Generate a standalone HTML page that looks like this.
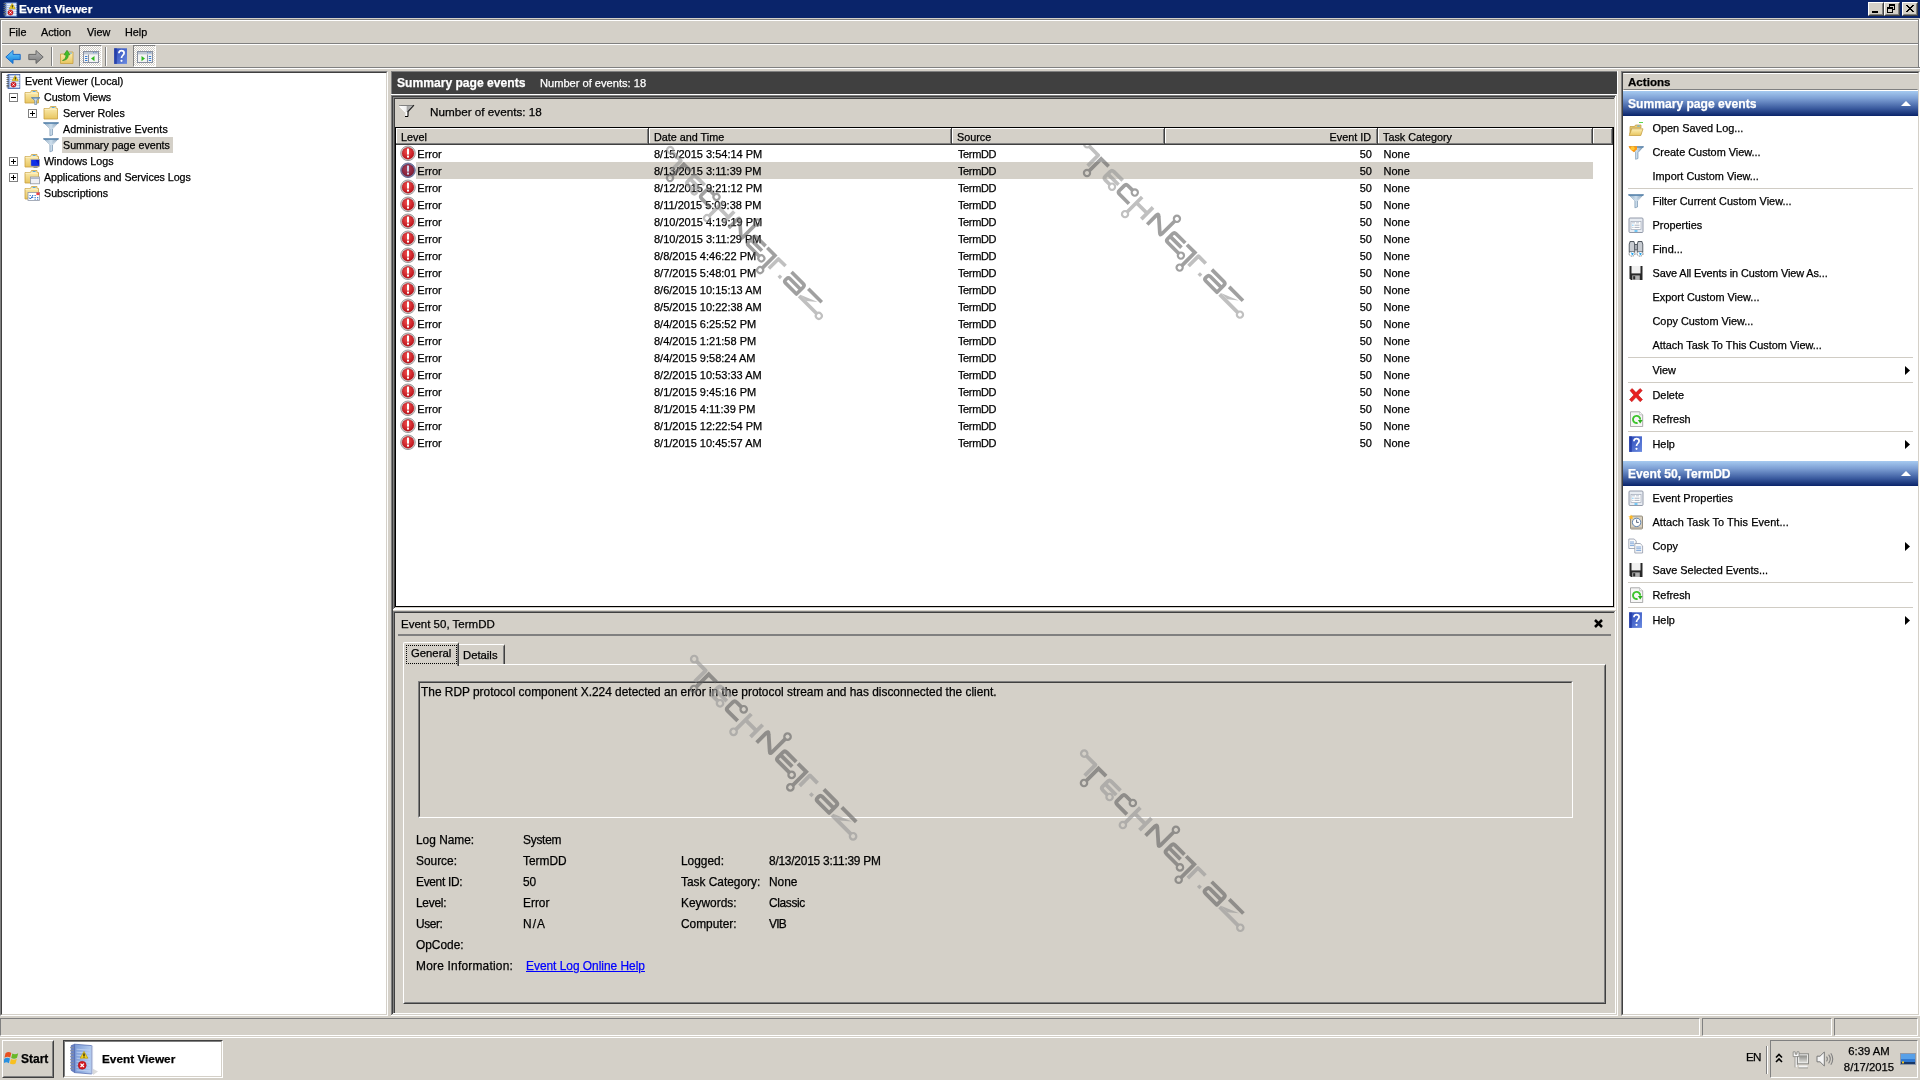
<!DOCTYPE html><html><head><meta charset="utf-8"><title>Event Viewer</title><style>
*{box-sizing:border-box;margin:0;padding:0}
html,body{width:1920px;height:1080px;overflow:hidden;background:#d4d0c8;font-family:"Liberation Sans",sans-serif;font-size:11px;color:#000}
.a{position:absolute}
.t{position:absolute;white-space:nowrap;line-height:14px;height:14px;-webkit-text-stroke:0.25px currentColor}
.tr{font-size:10.7px}
.ac{font-size:10.9px}
.ls{font-size:11px}
.dt{font-size:11.9px;line-height:15px;height:15px}
.sunk{border:1px solid;border-color:#808080 #fff #fff #808080}
.sunk2{border:1px solid;border-color:#404040 #d4d0c8 #d4d0c8 #404040}
.hl{position:absolute;height:1px}
.vl{position:absolute;width:1px}
svg{position:absolute;overflow:visible}
</style></head><body><div id="root" style="position:absolute;left:0;top:0;width:1920px;height:1080px;will-change:transform">
<svg width="0" height="0" style="position:absolute">
<defs>
<linearGradient id="gFold" x1="0" y1="0" x2="0" y2="1"><stop offset="0" stop-color="#fdf0b8"/><stop offset="1" stop-color="#e8c55e"/></linearGradient>
<linearGradient id="gFun" x1="0" y1="0" x2="1" y2="0"><stop offset="0" stop-color="#7f9db8"/><stop offset="0.5" stop-color="#cfe0ee"/><stop offset="1" stop-color="#6f8ca8"/></linearGradient>
<linearGradient id="gBack" x1="0" y1="0" x2="0" y2="1"><stop offset="0" stop-color="#6fd0ff"/><stop offset="1" stop-color="#0a78d8"/></linearGradient>
<linearGradient id="gFwd" x1="0" y1="0" x2="0" y2="1"><stop offset="0" stop-color="#b8b8b8"/><stop offset="1" stop-color="#787878"/></linearGradient>
<linearGradient id="gHelp" x1="0" y1="0" x2="1" y2="1"><stop offset="0" stop-color="#2a48b8"/><stop offset="1" stop-color="#6a8ae0"/></linearGradient>
<radialGradient id="gErr" cx="0.45" cy="0.35" r="0.7"><stop offset="0" stop-color="#f05050"/><stop offset="1" stop-color="#b80c14"/></radialGradient>
<radialGradient id="gErrS" cx="0.45" cy="0.35" r="0.7"><stop offset="0" stop-color="#a84058"/><stop offset="1" stop-color="#801830"/></radialGradient>
<linearGradient id="gBook2" x1="0" y1="0" x2="1" y2="0"><stop offset="0" stop-color="#7c9cd8"/><stop offset="1" stop-color="#b4ccf0"/></linearGradient>
<linearGradient id="gBook" x1="0" y1="0" x2="1" y2="0"><stop offset="0" stop-color="#7c98d4"/><stop offset="0.25" stop-color="#b4c8ec"/><stop offset="1" stop-color="#c4d6f2"/></linearGradient>

<symbol id="ev" viewBox="0 0 16 16">
 <rect x="3" y="1.5" width="11.8" height="14" fill="url(#gBook)" stroke="#4060a8" stroke-width="0.8"/>
 <path d="M5 3.5h9.4M5 5.5h9.4M5 7.5h9.4M5 9.5h9.4M5 11.5h9.4M5 13.5h9.4" stroke="#eef4fc" stroke-width="0.9"/>
 <path d="M1.5 2.5h2.5M1.5 4.5h2.5M1.5 6.5h2.5M1.5 8.5h2.5M1.5 10.5h2.5M1.5 12.5h2.5M1.5 13.8h2.5" stroke="#606870" stroke-width="1"/>
 <path d="M10.2 2.4L13.3 7.8H7.1z" fill="#f8d820" stroke="#a08000" stroke-width="0.5"/>
 <rect x="9.8" y="4.2" width="0.9" height="1.9" fill="#000"/><rect x="9.8" y="6.5" width="0.9" height="0.7" fill="#000"/>
 <circle cx="8.5" cy="11.6" r="2.6" fill="#d81c24" stroke="#901018" stroke-width="0.4"/>
 <path d="M7.4 10.5l2.2 2.2M9.6 10.5l-2.2 2.2" stroke="#fff" stroke-width="0.9"/>
</symbol>

<symbol id="ev_big" viewBox="0 0 30 34">
 <path d="M23.5 25.5L29 28.5L24 32z" fill="#000" opacity="0.14"/>
 <path d="M2.2 2.6L5.6 1.2V29.6L2.2 27.4z" fill="#6c84c4" stroke="#4c64ac" stroke-width="0.6"/>
 <path d="M5.6 1.2L22.6 2.6V31L5.6 29.6z" fill="url(#gBook2)" stroke="#4c64ac" stroke-width="0.7"/>
 <path d="M22.6 2.6L23.6 3V30.4L22.6 31z" fill="#fff" stroke="#8094c8" stroke-width="0.4"/>
 <path d="M7.5 6.2L21 7.2M7.5 9.2L21 10.2M7.5 12.2L21 13.2M7.5 15.2L21 16.2M7.5 18.2L21 19.2M7.5 21.2L21 22.2M7.5 24.2L21 25.2M7.5 27L21 28" stroke="#c8d8f4" stroke-width="0.7"/>
 <path d="M1.2 4.6h3.4M1.2 7.6h3.4M1.2 10.6h3.4M1.2 13.6h3.4M1.2 16.6h3.4M1.2 19.6h3.4M1.2 22.6h3.4M1.2 25.6h3.4" stroke="#8890a0" stroke-width="1"/>
 <path d="M15 8.4L18.9 15.2H11.1z" fill="#f8d418" stroke="#b09000" stroke-width="0.6" stroke-linejoin="round"/>
 <rect x="14.45" y="10.4" width="1.1" height="2.6" fill="#000"/><rect x="14.45" y="13.5" width="1.1" height="1" fill="#000"/>
 <circle cx="13.2" cy="22.3" r="4" fill="#d41820" stroke="#981018" stroke-width="0.5"/>
 <path d="M11.5 20.6l3.4 3.4M14.9 20.6l-3.4 3.4" stroke="#fff" stroke-width="1.3"/>
</symbol>
<symbol id="back" viewBox="0 0 16 16">
 <path d="M8 1.5L0.8 8L8 14.5V10.6H15.2V5.4H8z" fill="url(#gBack)" stroke="#1c6cc8" stroke-width="1" stroke-linejoin="round"/>
</symbol>
<symbol id="fwd" viewBox="0 0 16 16">
 <path d="M8 1.5L15.2 8L8 14.5V10.6H0.8V5.4H8z" fill="url(#gFwd)" stroke="#686868" stroke-width="1" stroke-linejoin="round"/>
</symbol>
<symbol id="folder" viewBox="0 0 16 16">
 <path d="M1 3.5h5.5l1-2H13v2h1.5V14H1z" fill="url(#gFold)" stroke="#c8a040" stroke-width="0.8"/>
 <rect x="8.6" y="2" width="3" height="1" fill="#58a8e8"/>
 <path d="M1.4 4.2h12.6" stroke="#fff8d8" stroke-width="0.7"/>
</symbol>
<symbol id="upf" viewBox="0 0 16 16">
 <path d="M1.5 5h5l1-2H14v11.5H1.5z" fill="url(#gFold)" stroke="#c8a040" stroke-width="0.8"/>
 <rect x="10.5" y="3.6" width="2.4" height="1" fill="#58a8e8"/>
 <path d="M3.5 11.5C6.5 10.5 7 8 6.8 5.8H5L8 1.3L11 5.8H9.2C9.6 9 7.5 11.3 3.5 11.5z" fill="#40c028" stroke="#288818" stroke-width="0.6"/>
</symbol>
<symbol id="panel_l" viewBox="0 0 16 16">
 <rect x="0.5" y="2.5" width="15" height="11" fill="#f4f4f4" stroke="#8890a0"/>
 <rect x="1" y="3" width="14" height="2.4" fill="#c0c8d4"/>
 <path d="M10 3.6h1.2M12.4 3.6h1.2" stroke="#5888c8" stroke-width="0.9"/>
 <path d="M5.5 5.5v8" stroke="#8890a0"/>
 <path d="M2 7.5h2.4M2 9.5h2.4M2 11.5h2.4" stroke="#3880d8" stroke-width="1"/>
 <path d="M11.5 7L8 9.6L11.5 12.2z" fill="#30b820"/>
</symbol>
<symbol id="panel_r" viewBox="0 0 16 16">
 <rect x="0.5" y="2.5" width="15" height="11" fill="#f4f4f4" stroke="#8890a0"/>
 <rect x="1" y="3" width="14" height="2.4" fill="#c0c8d4"/>
 <path d="M10 3.6h1.2M12.4 3.6h1.2" stroke="#5888c8" stroke-width="0.9"/>
 <path d="M10.5 5.5v8" stroke="#8890a0"/>
 <path d="M11.8 7.5h2.4M11.8 9.5h2.4M11.8 11.5h2.4" stroke="#3880d8" stroke-width="1"/>
 <path d="M4.5 7L8 9.6L4.5 12.2z" fill="#30b820"/>
</symbol>
<symbol id="help" viewBox="0 0 16 16">
 <rect x="1.2" y="0.3" width="12.8" height="15.6" fill="url(#gHelp)"/>
 <rect x="1.2" y="0.3" width="2.6" height="15.6" fill="#2038a0" opacity="0.75"/>
 <path d="M5.9 5.2C5.9 3.2 7.1 2.6 8.4 2.6C10.1 2.6 11.1 3.6 11.1 5C11.1 7.2 8.5 7.4 8.5 10" stroke="#fff" stroke-width="1.7" fill="none"/>
 <circle cx="8.5" cy="12.8" r="1.1" fill="#fff"/>
</symbol>
<symbol id="funnel" viewBox="0 0 16 16">
 <path d="M0.5 1.5h15l-6 6.3v6.2l-2.6 0.8V7.8z" fill="url(#gFun)" stroke="#6888a8" stroke-width="0.6"/>
 <path d="M0.5 1.5h15v1.4h-15z" fill="#5c88b0"/>
 <path d="M3 3.5L7.5 8M13 3.5L9 8" stroke="#eaf2f8" stroke-width="0.8" opacity="0.8"/>
</symbol>
<symbol id="funnel_o" viewBox="0 0 16 16">
 <path d="M1.5 1.5h14l-5.5 6v6l-2.4 0.8V7.5z" fill="url(#gFun)" stroke="#6888a8" stroke-width="0.6"/>
 <path d="M1.5 1.5h14v1.2h-14z" fill="#5c88b0"/>
 <path d="M0.5 1.2h8.5v3.2L7.6 5.6L6 7.2L3.6 5.4L1.8 3.8z" fill="#ff9a10"/>
 <circle cx="4.6" cy="3.2" r="2" fill="#ffc838"/>
</symbol>
<symbol id="filt" viewBox="0 0 16 16">
 <linearGradient id="gFilt" x1="0" y1="0" x2="1" y2="0"><stop offset="0" stop-color="#fff"/><stop offset="0.45" stop-color="#f0f0f0"/><stop offset="0.55" stop-color="#a8a8a8"/><stop offset="1" stop-color="#c8c8c8"/></linearGradient>
 <path d="M1 2h13.5L8 8.5z" fill="url(#gFilt)"/>
 <path d="M0 1.5h15" stroke="#808080" stroke-width="1"/>
 <path d="M0.5 2L6.5 8.2" stroke="#fff" stroke-width="1.2"/>
 <path d="M15 1.2L8.6 8" stroke="#202020" stroke-width="1.1"/>
 <rect x="6.5" y="8" width="2" height="4" fill="#fff"/>
 <path d="M9 8v4.5h-3" stroke="#000" stroke-width="1" fill="none"/>
</symbol>
<symbol id="f_funnel" viewBox="0 0 16 16">
 <use href="#folder"/>
 <path d="M7.5 8.5h8.3l-3.2 3.2v3.8l-1.8 0.4v-4.2z" fill="url(#gFun)" stroke="#5878a0" stroke-width="0.6"/>
 <path d="M7.5 8.5h8.3v1h-8.3z" fill="#5c88b0"/>
</symbol>
<symbol id="f_mon" viewBox="0 0 16 16">
 <use href="#folder"/>
 <rect x="7" y="6.5" width="8.6" height="6.6" fill="#0818c8" stroke="#a8a8b0" stroke-width="0.8"/>
 <path d="M7.5 7h4l3.5 5.6h-7.5z" fill="#1030e8"/>
 <path d="M9.5 13.5h4v1.5h-4z" fill="#909090"/>
</symbol>
<symbol id="f_win" viewBox="0 0 16 16">
 <use href="#folder"/>
 <rect x="6.5" y="8" width="9" height="6.8" fill="#f0f0f4" stroke="#9098a8" stroke-width="0.8"/>
 <rect x="6.9" y="8.4" width="8.2" height="1.6" fill="#b0b8c8"/>
</symbol>
<symbol id="f_cal" viewBox="0 0 16 16">
 <use href="#folder"/>
 <rect x="4" y="7.5" width="11.5" height="8" fill="#fff" stroke="#9098a8" stroke-width="0.8"/>
 <rect x="12.4" y="7.5" width="3.1" height="2.6" fill="#f04040"/>
 <path d="M5.5 10.5h1.3M8 10.5h1.3M10.5 10.5h1.3M8 12.5h1.3M10.5 12.5h1.3M13 12.5h1.3M10.5 14.2h1.3M13 14.2h1.3" stroke="#4080d0" stroke-width="1"/>
 <path d="M5.2 12.6l1.2 1.4l2-2.8" stroke="#2060c0" stroke-width="1" fill="none"/>
</symbol>
<symbol id="err" viewBox="0 0 16 16">
 <circle cx="8" cy="8.3" r="7.3" fill="#e0e0e0" stroke="#909090" stroke-width="0.9"/>
 <circle cx="8" cy="8.3" r="5.9" fill="url(#gErr)" stroke="#a01018" stroke-width="0.5"/>
 <rect x="7" y="3.6" width="2" height="6" fill="#fff"/><rect x="7" y="10.6" width="2" height="2" fill="#fff"/>
</symbol>
<symbol id="err_sel" viewBox="0 0 16 16">
 <circle cx="8" cy="8.3" r="7.3" fill="#8088b0" stroke="#606890" stroke-width="0.9"/>
 <circle cx="8" cy="8.3" r="5.9" fill="url(#gErrS)" stroke="#601028" stroke-width="0.5"/>
 <rect x="7" y="3.6" width="2" height="6" fill="#d0d8f0"/><rect x="7" y="10.6" width="2" height="2" fill="#d0d8f0"/>
</symbol>
<symbol id="openf" viewBox="0 0 16 16">
 <path d="M2 4.5h4.5l1-1.5H13v3h-9.5L2 12z" fill="#e8cc78" stroke="#c09838" stroke-width="0.7"/>
 <rect x="9.2" y="3.6" width="2.6" height="1" fill="#58a8e8"/>
 <path d="M3.8 6.8H15l-2.2 6.7H1.2z" fill="url(#gFold)" stroke="#c09838" stroke-width="0.7"/>
 <path d="M11 0.5h4" stroke="#30d020" stroke-width="0.8"/>
</symbol>
<symbol id="props" viewBox="0 0 16 16">
 <rect x="1" y="1" width="14" height="14.5" rx="1" fill="#e8ecf2" stroke="#8890a0" stroke-width="0.9"/>
 <rect x="3" y="4.5" width="10" height="8" fill="#fff" stroke="#a0a8b8" stroke-width="0.7"/>
 <path d="M3.5 5h3.5v1.5h-3.5zM8 5h3v1.5h-3z" fill="#d0d6e0"/>
 <path d="M6.5 8.2h5M6.5 10.4h5" stroke="#a0a8b8" stroke-width="0.9"/>
 <rect x="4.4" y="7.7" width="1" height="1" fill="#20a0f0"/><rect x="4.4" y="9.9" width="1" height="1" fill="#a0a8b8"/>
 <rect x="6.5" y="13.4" width="3" height="1.2" fill="#28b0f8"/>
</symbol>
<symbol id="bino" viewBox="0 0 16 16"><g transform="translate(0,-1.8) scale(1,1.16)">
 <path d="M2.2 2h3.6l1 2.2v6.8H1.2V4.2z" fill="#c8ccd2" stroke="#505860" stroke-width="0.9"/>
 <path d="M10.2 2h3.6l1 2.2v6.8H9.2V4.2z" fill="#c8ccd2" stroke="#505860" stroke-width="0.9"/>
 <rect x="6.6" y="4.6" width="2.8" height="4.6" fill="#a8acb4" stroke="#505860" stroke-width="0.8"/>
 <ellipse cx="4" cy="12.6" rx="3" ry="2" fill="#fff" stroke="#404850" stroke-width="0.7" stroke-dasharray="1.2 0.8"/>
 <ellipse cx="12" cy="12.6" rx="3" ry="2" fill="#fff" stroke="#404850" stroke-width="0.7" stroke-dasharray="1.2 0.8"/>
 <path d="M3 11.2l3 1.4l-2 1.4z" fill="#18a0f0"/><path d="M11 11.2l3 1.4l-2 1.4z" fill="#18a0f0"/>
</g></symbol>
<symbol id="floppy" viewBox="0 0 16 16">
 <path d="M1.5 1h13v14H3L1.5 13.6z" fill="#282828"/>
 <rect x="3.5" y="1" width="9" height="7.4" fill="#f0f0f0"/>
 <rect x="4.2" y="10.4" width="7.6" height="4.6" fill="#b0b0b0"/>
 <rect x="5.2" y="11.2" width="2" height="3.2" fill="#282828"/>
</symbol>
<symbol id="delx" viewBox="0 0 16 16">
 <path d="M2 3.5L4.2 1.5L8 5.6L12 1.5L14.3 3.5L10.2 8L14.5 12.6L12.2 14.8L8 10.3L3.8 14.8L1.5 12.6L5.8 8z" fill="#e82020" stroke="#b01010" stroke-width="0.5"/>
</symbol>
<symbol id="refresh" viewBox="0 0 16 16">
 <path d="M2.5 0.8h9.2l3 3v11.8H2.5z" fill="#f6f6f6" stroke="#a0a0a0" stroke-width="0.9"/>
 <path d="M11.7 0.8v3h3" fill="#fff" stroke="#b0b0b0" stroke-width="0.7"/>
 <path d="M12.2 8.6A3.6 3.6 0 1 0 9.6 11.9" fill="none" stroke="#3cc42c" stroke-width="1.9"/>
 <path d="M9.9 8.9H14.6L12.2 12.6z" fill="#2cb01c"/>
</symbol>
<symbol id="task" viewBox="0 0 16 16">
 <rect x="2.5" y="2" width="12" height="13" rx="1" fill="#d8d0c0" stroke="#807868" stroke-width="0.8"/>
 <circle cx="8.6" cy="8.4" r="4.2" fill="#fff" stroke="#5078a8" stroke-width="0.9"/>
 <path d="M8.6 5.6v2.8h2.2" stroke="#304060" stroke-width="0.8" fill="none"/>
 <path d="M3 0.4l0.8 1.8l1.9 0.2l-1.4 1.2l0.4 1.9L3 4.5l-1.7 1l0.4-1.9L0.3 2.4l1.9-0.2z" fill="#ffb820"/>
 <rect x="3" y="13.4" width="11" height="1.2" fill="#b0a898"/>
</symbol>
<symbol id="copy" viewBox="0 0 16 16">
 <path d="M0.8 1h5.4l2 2v7.5H0.8z" fill="#fafafa" stroke="#9098a8" stroke-width="0.8"/>
 <path d="M2 4h4M2 5.8h4M2 7.6h4" stroke="#6090d0" stroke-width="0.8"/>
 <path d="M6.8 5.5h5.4l2.4 2.4V15H6.8z" fill="#fafafa" stroke="#9098a8" stroke-width="0.8"/>
 <path d="M8.2 9h5M8.2 10.8h5M8.2 12.6h5" stroke="#6090d0" stroke-width="0.8"/>
</symbol>
<symbol id="winlogo" viewBox="0 0 16 16">
 <path d="M1.5 3.2C3.5 1.8 5.5 1.8 7.3 3L6.2 7.6C4.5 6.4 2.5 6.5 0.5 7.8z" fill="#e85020"/>
 <path d="M8.3 3.4C10 4.5 12 4.5 14.2 3.2L13 7.8C11 9 9 8.9 7.2 7.9z" fill="#68b828"/>
 <path d="M0.3 8.8C2.3 7.5 4.3 7.5 6 8.6L4.9 13.2C3.2 12 1.2 12 -0.8 13.4z" fill="#2890e0"/>
 <path d="M7 9C8.8 10 10.8 10 12.8 8.8L11.6 13.4C9.6 14.6 7.6 14.6 5.9 13.5z" fill="#f8c020"/>
</symbol>
<symbol id="chev" viewBox="0 0 8 10">
 <path d="M1 4.5L4 1.5L7 4.5M1 9L4 6L7 9" fill="none" stroke="#000" stroke-width="1.6"/>
</symbol>
<symbol id="net" viewBox="0 0 18 18">
 <linearGradient id="gScr" x1="0" y1="0" x2="0" y2="1"><stop offset="0" stop-color="#8c8c88"/><stop offset="1" stop-color="#d8d8d4"/></linearGradient>
 <rect x="5.5" y="2.8" width="11" height="10" fill="#ececea" stroke="#8a8a86"/>
 <rect x="7.2" y="4.4" width="7.8" height="6.8" fill="url(#gScr)"/>
 <path d="M7 15.6h8.5" stroke="#f4f4f4" stroke-width="2.2"/><path d="M6.4 16.9h9.6" stroke="#8a8a86" stroke-width="0.8"/>
 <path d="M4.2 5.5V16" stroke="#f4f4f4" stroke-width="1.8"/><path d="M3 5.5V16.4M5.3 5.5V14" stroke="#8a8a86" stroke-width="0.7" fill="none"/>
 <path d="M1.2 0.8h2v2.4h1.8V0.8h2v4.8H1.2z" fill="#fafafa" stroke="#80807c" stroke-width="0.8"/>
</symbol>
<symbol id="spk" viewBox="0 0 18 16">
 <path d="M1 5.2h3L8.3 1v14L4 10.8H1z" fill="#f4f4f4" stroke="#787878" stroke-width="1"/>
 <path d="M10.5 5.6C11.5 7 11.5 9 10.5 10.4M12.6 3.6C14.6 6.2 14.6 9.8 12.6 12.4M14.8 2.2C17.2 5.8 17.2 10.2 14.8 13.8" fill="none" stroke="#808080" stroke-width="1.1"/>
</symbol>
<symbol id="desk" viewBox="0 0 16 12">
 <rect x="0.5" y="0.5" width="15" height="11" fill="#3078d0" stroke="#9098a8"/>
 <rect x="1" y="1" width="14" height="5" fill="#58a0e8"/>
 <rect x="1" y="9" width="14" height="2" fill="#183868"/>
 <rect x="2" y="8.4" width="2" height="2" fill="#f0c020"/>
</symbol>

<g id="wm" fill="none" stroke-width="3.7" stroke-linejoin="round" stroke-linecap="butt">
 <g stroke="#969696">
  <path d="M-17.6 -20.5H-4.6V-5.5"/>
  <circle cx="-20.2" cy="-20.5" r="3.1" stroke-width="2.2"/>
  <path d="M30.5 -20H18Q15.3 -20 15.3 -17.5V-10.6Q15.3 -8 18 -8H24.6M15.3 -14H30.6"/>
  <circle cx="27.4" cy="-8" r="3.1" stroke-width="2.2"/>
  <path d="M56 -22V-0.8M56 -14H71M71 -22.4V-5.8"/>
  <circle cx="56" cy="2.2" r="3.1" stroke-width="2.2"/>
  <path d="M137.6 -6V-20H148"/>
  <path d="M150 -8H153.4" stroke-width="3.4"/>
  <path d="M179.6 -8H205.4"/><path d="M179.6 -9.8L197.5 -17.2L188.5 -9.8Z" fill="#969696" stroke="none"/>
  <circle cx="208.3" cy="-8" r="3.1" stroke-width="2.2"/>
 </g>
 <g stroke="#626262">
  <path d="M0 -3V-20H10.6" stroke-linejoin="miter"/>
  <circle cx="0" cy="0" r="3.1" stroke-width="2.2"/>
  <path d="M44.6 -20H38Q35.3 -20 35.3 -17.5V-10.5Q35.3 -8 38 -8H51.4"/>
  <circle cx="47.6" cy="-20" r="3.1" stroke-width="2.2"/>
  <path d="M79 -6.2V-19Q79 -22.5 81.5 -20L94 -9Q96 -7 96 -10V-28.2"/>
  <circle cx="96" cy="-31.2" r="3.1" stroke-width="2.2"/>
  <path d="M119 -20H106.2Q103.5 -20 103.5 -17.5V-10.6Q103.5 -8 106.2 -8H121.8M105 -14H119.6"/>
  <circle cx="124.8" cy="-8" r="3.1" stroke-width="2.2"/>
  <path d="M121.4 -20H132.6V-1.6" stroke-linejoin="miter"/>
  <circle cx="132.4" cy="1.4" r="3.1" stroke-width="2.2"/>
  <path d="M156.6 -20H173.5Q176.2 -20 176.2 -17.5V-7.6H160.4Q158 -7.6 158 -10V-11.6Q158 -14 160.4 -14H176"/>
  <path d="M181 -20H200.6"/>
 </g>
</g>
</defs>
</svg>

<div class="a" style="left:0px;top:0px;width:1920px;height:18px;background:#0a246a;"></div>
<svg class="a" style="left:2px;top:1px" width="16" height="16" viewBox="0 0 16 16" ><use href="#ev"/></svg>
<div class="t " style="left:19px;top:2px;color:#fff;font-weight:bold;font-size:11.8px">Event Viewer</div>
<div class="a" style="left:1868px;top:2px;width:16px;height:14px;background:#d4d0c8;border:1px solid;border-color:#fff #404040 #404040 #fff"><div class="a" style="left:0;top:0;width:14px;height:12px;border:1px solid;border-color:#d4d0c8 #808080 #808080 #d4d0c8"></div></div>
<div class="a" style="left:1872px;top:11px;width:6px;height:2px;background:#000;"></div>
<div class="a" style="left:1884px;top:2px;width:16px;height:14px;background:#d4d0c8;border:1px solid;border-color:#fff #404040 #404040 #fff"><div class="a" style="left:0;top:0;width:14px;height:12px;border:1px solid;border-color:#d4d0c8 #808080 #808080 #d4d0c8"></div></div>
<svg class="a" style="left:1887px;top:4px" width="10" height="10" viewBox="0 0 10 10" shape-rendering="crispEdges"><path d="M2 0h6v2H2zM2 2h1v2H2zM7 2h1v4H7zM6 5h1v1H6z M0 3h6v2H0zM0 5h1v4H0zM5 5h1v4H5zM0 8h6v1H0z" fill="#000"/></svg>
<div class="a" style="left:1902px;top:2px;width:16px;height:14px;background:#d4d0c8;border:1px solid;border-color:#fff #404040 #404040 #fff"><div class="a" style="left:0;top:0;width:14px;height:12px;border:1px solid;border-color:#d4d0c8 #808080 #808080 #d4d0c8"></div></div>
<svg class="a" style="left:1906px;top:5px" width="8" height="7" viewBox="0 0 8 7" shape-rendering="crispEdges"><path d="M0 0h2v1H0zM6 0h2v1H6zM1 1h2v1H1zM5 1h2v1H5zM2 2h4v1H2zM3 3h2v1H3zM2 4h4v1H2zM1 5h2v1H1zM5 5h2v1H5zM0 6h2v1H0zM6 6h2v1H6z" fill="#000"/></svg>
<div class="a" style="left:0px;top:19px;width:1920px;height:1px;background:#808080;"></div>
<div class="a" style="left:1px;top:20px;width:1918px;height:1px;background:#fff;"></div>
<div class="a" style="left:0px;top:19px;width:1px;height:50px;background:#808080;"></div>
<div class="a" style="left:1px;top:20px;width:1px;height:48px;background:#fff;"></div>
<div class="a" style="left:1918px;top:20px;width:1px;height:48px;background:#808080;"></div>
<div class="a" style="left:1919px;top:19px;width:1px;height:50px;background:#fff;"></div>
<div class="t " style="left:9px;top:25px;font-size:10.8px">File</div>
<div class="t " style="left:41px;top:25px;font-size:10.8px">Action</div>
<div class="t " style="left:87px;top:25px;font-size:10.8px">View</div>
<div class="t " style="left:125px;top:25px;font-size:10.8px">Help</div>
<div class="a" style="left:2px;top:43px;width:1916px;height:1px;background:#808080;"></div>
<div class="a" style="left:2px;top:44px;width:1916px;height:1px;background:#fff;"></div>
<div class="a" style="left:0px;top:67px;width:1920px;height:1px;background:#808080;"></div>
<div class="a" style="left:0px;top:68px;width:1920px;height:1px;background:#fff;"></div>
<svg class="a" style="left:5px;top:49px" width="16" height="16" viewBox="0 0 16 16" ><use href="#back"/></svg>
<svg class="a" style="left:28px;top:49px" width="16" height="16" viewBox="0 0 16 16" ><use href="#fwd"/></svg>
<div class="a" style="left:51px;top:47px;width:1px;height:19px;background:#808080;"></div>
<div class="a" style="left:52px;top:47px;width:1px;height:19px;background:#fff;"></div>
<svg class="a" style="left:59px;top:49px" width="16" height="16" viewBox="0 0 16 16" ><use href="#upf"/></svg>
<div class="a" style="left:79px;top:45px;width:23px;height:22px;border:1px solid;border-color:#808080 #fff #fff #808080;background-color:#d4d0c8;background-image:linear-gradient(45deg,#fff 25%,transparent 25%,transparent 75%,#fff 75%),linear-gradient(45deg,#fff 25%,transparent 25%,transparent 75%,#fff 75%);background-size:2px 2px;background-position:0 0,1px 1px"></div>
<svg class="a" style="left:83px;top:49px" width="16" height="16" viewBox="0 0 16 16" ><use href="#panel_l"/></svg>
<div class="a" style="left:105px;top:47px;width:1px;height:19px;background:#808080;"></div>
<div class="a" style="left:106px;top:47px;width:1px;height:19px;background:#fff;"></div>
<svg class="a" style="left:113px;top:48px" width="16" height="16" viewBox="0 0 16 16" ><use href="#help"/></svg>
<div class="a" style="left:133px;top:45px;width:23px;height:22px;border:1px solid;border-color:#808080 #fff #fff #808080;background-color:#d4d0c8;background-image:linear-gradient(45deg,#fff 25%,transparent 25%,transparent 75%,#fff 75%),linear-gradient(45deg,#fff 25%,transparent 25%,transparent 75%,#fff 75%);background-size:2px 2px;background-position:0 0,1px 1px"></div>
<svg class="a" style="left:137px;top:49px" width="16" height="16" viewBox="0 0 16 16" ><use href="#panel_r"/></svg>
<div class="a sunk" style="left:0;top:71px;width:388px;height:945px"><div class="a sunk2" style="left:0;top:0;width:386px;height:943px;background:#fff"></div></div>
<svg class="a" style="left:5px;top:73px" width="16" height="16" viewBox="0 0 16 16" ><use href="#ev"/></svg>
<div class="t tr" style="left:25px;top:74px;">Event Viewer (Local)</div>
<svg class="a" style="left:9px;top:93px" width="9" height="9" viewBox="0 0 9 9" shape-rendering="crispEdges"><rect x="0.5" y="0.5" width="8" height="8" fill="#fff" stroke="#808080"/><path d="M2 4h5v1H2z" fill="#000"/></svg>
<svg class="a" style="left:24px;top:89px" width="16" height="16" viewBox="0 0 16 16" ><use href="#f_funnel"/></svg>
<div class="t tr" style="left:44px;top:90px;;letter-spacing:-0.09px">Custom Views</div>
<svg class="a" style="left:28px;top:109px" width="9" height="9" viewBox="0 0 9 9" shape-rendering="crispEdges"><rect x="0.5" y="0.5" width="8" height="8" fill="#fff" stroke="#808080"/><path d="M2 4h5v1H2z M4 2h1v5H4z" fill="#000"/></svg>
<svg class="a" style="left:43px;top:105px" width="16" height="16" viewBox="0 0 16 16" ><use href="#folder"/></svg>
<div class="t tr" style="left:63px;top:106px;">Server Roles</div>
<svg class="a" style="left:43px;top:121px" width="16" height="16" viewBox="0 0 16 16" ><use href="#funnel"/></svg>
<div class="t tr" style="left:63px;top:122px;;letter-spacing:0.1px">Administrative Events</div>
<div class="a" style="left:62px;top:137px;width:111px;height:16px;background:#d4d0c8;"></div>
<svg class="a" style="left:43px;top:137px" width="16" height="16" viewBox="0 0 16 16" ><use href="#funnel"/></svg>
<div class="t tr" style="left:63px;top:138px;">Summary page events</div>
<svg class="a" style="left:9px;top:157px" width="9" height="9" viewBox="0 0 9 9" shape-rendering="crispEdges"><rect x="0.5" y="0.5" width="8" height="8" fill="#fff" stroke="#808080"/><path d="M2 4h5v1H2z M4 2h1v5H4z" fill="#000"/></svg>
<svg class="a" style="left:24px;top:153px" width="16" height="16" viewBox="0 0 16 16" ><use href="#f_mon"/></svg>
<div class="t tr" style="left:44px;top:154px;">Windows Logs</div>
<svg class="a" style="left:9px;top:173px" width="9" height="9" viewBox="0 0 9 9" shape-rendering="crispEdges"><rect x="0.5" y="0.5" width="8" height="8" fill="#fff" stroke="#808080"/><path d="M2 4h5v1H2z M4 2h1v5H4z" fill="#000"/></svg>
<svg class="a" style="left:24px;top:169px" width="16" height="16" viewBox="0 0 16 16" ><use href="#f_win"/></svg>
<div class="t tr" style="left:44px;top:170px;;letter-spacing:-0.06px">Applications and Services Logs</div>
<svg class="a" style="left:24px;top:185px" width="16" height="16" viewBox="0 0 16 16" ><use href="#f_cal"/></svg>
<div class="t tr" style="left:44px;top:186px;">Subscriptions</div>
<div class="a" style="left:391px;top:71px;width:1227px;height:1px;background:#808080;"></div>
<div class="a" style="left:391px;top:71px;width:1px;height:944px;background:#808080;"></div>
<div class="a" style="left:392px;top:72px;width:1225px;height:1px;background:#404040;"></div>
<div class="a" style="left:392px;top:72px;width:1px;height:942px;background:#404040;"></div>
<div class="a" style="left:1617px;top:71px;width:1px;height:945px;background:#fff;"></div>
<div class="a" style="left:391px;top:1015px;width:1227px;height:1px;background:#fff;"></div>
<div class="a" style="left:1616px;top:72px;width:1px;height:943px;background:#d4d0c8;"></div>
<div class="a" style="left:392px;top:1014px;width:1225px;height:1px;background:#d4d0c8;"></div>
<div class="a" style="left:392px;top:72px;width:1225px;height:22px;background:#404040;"></div>
<div class="t " style="left:397px;top:76px;color:#fff;font-weight:bold;font-size:12.1px">Summary page events</div>
<div class="t " style="left:540px;top:76px;color:#fff;font-size:11.1px">Number of events: 18</div>
<div class="a" style="left:391px;top:94px;width:1226px;height:1px;background:#fff;"></div>
<div class="a" style="left:391px;top:95px;width:1225px;height:1px;background:#808080;"></div>
<div class="a" style="left:392px;top:96px;width:1223px;height:1px;background:#404040;"></div>
<div class="a" style="left:393px;top:97px;width:1222px;height:1px;background:#808080;"></div>
<div class="a" style="left:394px;top:98px;width:1220px;height:1px;background:#404040;"></div>
<div class="a" style="left:393px;top:97px;width:1px;height:512px;background:#808080;"></div>
<div class="a" style="left:394px;top:98px;width:1px;height:510px;background:#404040;"></div>
<div class="a" style="left:1615px;top:96px;width:1px;height:514px;background:#fff;"></div>
<div class="a" style="left:1614px;top:98px;width:1px;height:511px;background:#d4d0c8;"></div>
<div class="a" style="left:393px;top:609px;width:1223px;height:1px;background:#fff;"></div>
<div class="a" style="left:394px;top:608px;width:1221px;height:1px;background:#fff;"></div>
<svg class="a" style="left:399px;top:104px" width="16" height="16" viewBox="0 0 16 16" ><use href="#filt"/></svg>
<div class="t ls" style="left:430px;top:105px;font-size:11.7px">Number of events: 18</div>
<div class="a" style="left:395px;top:127px;width:1219px;height:480px;border:1px solid #000;background:#fff"></div>
<div class="a" style="left:396px;top:128px;width:1217px;height:17px;background:#d4d0c8;"></div>
<div class="a" style="left:396px;top:143px;width:1217px;height:1px;background:#808080;"></div>
<div class="a" style="left:396px;top:144px;width:1217px;height:1px;background:#404040;"></div>
<div class="a" style="left:396px;top:128px;width:1px;height:15px;background:#fff;"></div>
<div class="a" style="left:396px;top:128px;width:253px;height:1px;background:#fff;"></div>
<div class="a" style="left:648px;top:128px;width:1px;height:16px;background:#404040;"></div>
<div class="a" style="left:647px;top:129px;width:1px;height:15px;background:#808080;"></div>
<div class="t ls" style="left:401px;top:130px;font-size:10.8px">Level</div>
<div class="a" style="left:649px;top:128px;width:1px;height:15px;background:#fff;"></div>
<div class="a" style="left:649px;top:128px;width:303px;height:1px;background:#fff;"></div>
<div class="a" style="left:951px;top:128px;width:1px;height:16px;background:#404040;"></div>
<div class="a" style="left:950px;top:129px;width:1px;height:15px;background:#808080;"></div>
<div class="t ls" style="left:654px;top:130px;font-size:10.8px">Date and Time</div>
<div class="a" style="left:952px;top:128px;width:1px;height:15px;background:#fff;"></div>
<div class="a" style="left:952px;top:128px;width:213px;height:1px;background:#fff;"></div>
<div class="a" style="left:1164px;top:128px;width:1px;height:16px;background:#404040;"></div>
<div class="a" style="left:1163px;top:129px;width:1px;height:15px;background:#808080;"></div>
<div class="t ls" style="left:957px;top:130px;font-size:10.8px">Source</div>
<div class="a" style="left:1165px;top:128px;width:1px;height:15px;background:#fff;"></div>
<div class="a" style="left:1165px;top:128px;width:213px;height:1px;background:#fff;"></div>
<div class="a" style="left:1377px;top:128px;width:1px;height:16px;background:#404040;"></div>
<div class="a" style="left:1376px;top:129px;width:1px;height:15px;background:#808080;"></div>
<div class="t ls" style="left:1165px;width:206px;text-align:right;top:130px;font-size:10.8px">Event ID</div>
<div class="a" style="left:1378px;top:128px;width:1px;height:15px;background:#fff;"></div>
<div class="a" style="left:1378px;top:128px;width:215px;height:1px;background:#fff;"></div>
<div class="a" style="left:1592px;top:128px;width:1px;height:16px;background:#404040;"></div>
<div class="a" style="left:1591px;top:129px;width:1px;height:15px;background:#808080;"></div>
<div class="t ls" style="left:1383px;top:130px;font-size:10.8px">Task Category</div>
<div class="a" style="left:1593px;top:128px;width:1px;height:15px;background:#fff;"></div>
<div class="a" style="left:1593px;top:128px;width:20px;height:1px;background:#fff;"></div>
<div class="a" style="left:1612px;top:128px;width:1px;height:16px;background:#404040;"></div>
<div class="a" style="left:1611px;top:129px;width:1px;height:15px;background:#808080;"></div>
<svg class="a" style="left:400px;top:145px" width="16" height="16" viewBox="0 0 16 16" ><use href="#err"/></svg>
<div class="t ls" style="left:417.3px;top:147px;">Error</div>
<div class="t ls" style="left:654px;top:147px;">8/15/2015 3:54:14 PM</div>
<div class="t ls" style="left:958px;top:147px;;letter-spacing:-0.38px">TermDD</div>
<div class="t ls" style="left:1300px;width:72px;text-align:right;top:147px">50</div>
<div class="t ls" style="left:1383.5px;top:147px;">None</div>
<div class="a" style="left:416px;top:162px;width:1177px;height:17px;background:#d4d0c8;"></div>
<svg class="a" style="left:400px;top:162px" width="16" height="16" viewBox="0 0 16 16" ><use href="#err_sel"/></svg>
<div class="t ls" style="left:417.3px;top:164px;">Error</div>
<div class="t ls" style="left:654px;top:164px;">8/13/2015 3:11:39 PM</div>
<div class="t ls" style="left:958px;top:164px;;letter-spacing:-0.38px">TermDD</div>
<div class="t ls" style="left:1300px;width:72px;text-align:right;top:164px">50</div>
<div class="t ls" style="left:1383.5px;top:164px;">None</div>
<svg class="a" style="left:400px;top:179px" width="16" height="16" viewBox="0 0 16 16" ><use href="#err"/></svg>
<div class="t ls" style="left:417.3px;top:181px;">Error</div>
<div class="t ls" style="left:654px;top:181px;">8/12/2015 9:21:12 PM</div>
<div class="t ls" style="left:958px;top:181px;;letter-spacing:-0.38px">TermDD</div>
<div class="t ls" style="left:1300px;width:72px;text-align:right;top:181px">50</div>
<div class="t ls" style="left:1383.5px;top:181px;">None</div>
<svg class="a" style="left:400px;top:196px" width="16" height="16" viewBox="0 0 16 16" ><use href="#err"/></svg>
<div class="t ls" style="left:417.3px;top:198px;">Error</div>
<div class="t ls" style="left:654px;top:198px;">8/11/2015 5:09:38 PM</div>
<div class="t ls" style="left:958px;top:198px;;letter-spacing:-0.38px">TermDD</div>
<div class="t ls" style="left:1300px;width:72px;text-align:right;top:198px">50</div>
<div class="t ls" style="left:1383.5px;top:198px;">None</div>
<svg class="a" style="left:400px;top:213px" width="16" height="16" viewBox="0 0 16 16" ><use href="#err"/></svg>
<div class="t ls" style="left:417.3px;top:215px;">Error</div>
<div class="t ls" style="left:654px;top:215px;">8/10/2015 4:19:19 PM</div>
<div class="t ls" style="left:958px;top:215px;;letter-spacing:-0.38px">TermDD</div>
<div class="t ls" style="left:1300px;width:72px;text-align:right;top:215px">50</div>
<div class="t ls" style="left:1383.5px;top:215px;">None</div>
<svg class="a" style="left:400px;top:230px" width="16" height="16" viewBox="0 0 16 16" ><use href="#err"/></svg>
<div class="t ls" style="left:417.3px;top:232px;">Error</div>
<div class="t ls" style="left:654px;top:232px;">8/10/2015 3:11:29 PM</div>
<div class="t ls" style="left:958px;top:232px;;letter-spacing:-0.38px">TermDD</div>
<div class="t ls" style="left:1300px;width:72px;text-align:right;top:232px">50</div>
<div class="t ls" style="left:1383.5px;top:232px;">None</div>
<svg class="a" style="left:400px;top:247px" width="16" height="16" viewBox="0 0 16 16" ><use href="#err"/></svg>
<div class="t ls" style="left:417.3px;top:249px;">Error</div>
<div class="t ls" style="left:654px;top:249px;">8/8/2015 4:46:22 PM</div>
<div class="t ls" style="left:958px;top:249px;;letter-spacing:-0.38px">TermDD</div>
<div class="t ls" style="left:1300px;width:72px;text-align:right;top:249px">50</div>
<div class="t ls" style="left:1383.5px;top:249px;">None</div>
<svg class="a" style="left:400px;top:264px" width="16" height="16" viewBox="0 0 16 16" ><use href="#err"/></svg>
<div class="t ls" style="left:417.3px;top:266px;">Error</div>
<div class="t ls" style="left:654px;top:266px;">8/7/2015 5:48:01 PM</div>
<div class="t ls" style="left:958px;top:266px;;letter-spacing:-0.38px">TermDD</div>
<div class="t ls" style="left:1300px;width:72px;text-align:right;top:266px">50</div>
<div class="t ls" style="left:1383.5px;top:266px;">None</div>
<svg class="a" style="left:400px;top:281px" width="16" height="16" viewBox="0 0 16 16" ><use href="#err"/></svg>
<div class="t ls" style="left:417.3px;top:283px;">Error</div>
<div class="t ls" style="left:654px;top:283px;">8/6/2015 10:15:13 AM</div>
<div class="t ls" style="left:958px;top:283px;;letter-spacing:-0.38px">TermDD</div>
<div class="t ls" style="left:1300px;width:72px;text-align:right;top:283px">50</div>
<div class="t ls" style="left:1383.5px;top:283px;">None</div>
<svg class="a" style="left:400px;top:298px" width="16" height="16" viewBox="0 0 16 16" ><use href="#err"/></svg>
<div class="t ls" style="left:417.3px;top:300px;">Error</div>
<div class="t ls" style="left:654px;top:300px;">8/5/2015 10:22:38 AM</div>
<div class="t ls" style="left:958px;top:300px;;letter-spacing:-0.38px">TermDD</div>
<div class="t ls" style="left:1300px;width:72px;text-align:right;top:300px">50</div>
<div class="t ls" style="left:1383.5px;top:300px;">None</div>
<svg class="a" style="left:400px;top:315px" width="16" height="16" viewBox="0 0 16 16" ><use href="#err"/></svg>
<div class="t ls" style="left:417.3px;top:317px;">Error</div>
<div class="t ls" style="left:654px;top:317px;">8/4/2015 6:25:52 PM</div>
<div class="t ls" style="left:958px;top:317px;;letter-spacing:-0.38px">TermDD</div>
<div class="t ls" style="left:1300px;width:72px;text-align:right;top:317px">50</div>
<div class="t ls" style="left:1383.5px;top:317px;">None</div>
<svg class="a" style="left:400px;top:332px" width="16" height="16" viewBox="0 0 16 16" ><use href="#err"/></svg>
<div class="t ls" style="left:417.3px;top:334px;">Error</div>
<div class="t ls" style="left:654px;top:334px;">8/4/2015 1:21:58 PM</div>
<div class="t ls" style="left:958px;top:334px;;letter-spacing:-0.38px">TermDD</div>
<div class="t ls" style="left:1300px;width:72px;text-align:right;top:334px">50</div>
<div class="t ls" style="left:1383.5px;top:334px;">None</div>
<svg class="a" style="left:400px;top:349px" width="16" height="16" viewBox="0 0 16 16" ><use href="#err"/></svg>
<div class="t ls" style="left:417.3px;top:351px;">Error</div>
<div class="t ls" style="left:654px;top:351px;">8/4/2015 9:58:24 AM</div>
<div class="t ls" style="left:958px;top:351px;;letter-spacing:-0.38px">TermDD</div>
<div class="t ls" style="left:1300px;width:72px;text-align:right;top:351px">50</div>
<div class="t ls" style="left:1383.5px;top:351px;">None</div>
<svg class="a" style="left:400px;top:366px" width="16" height="16" viewBox="0 0 16 16" ><use href="#err"/></svg>
<div class="t ls" style="left:417.3px;top:368px;">Error</div>
<div class="t ls" style="left:654px;top:368px;">8/2/2015 10:53:33 AM</div>
<div class="t ls" style="left:958px;top:368px;;letter-spacing:-0.38px">TermDD</div>
<div class="t ls" style="left:1300px;width:72px;text-align:right;top:368px">50</div>
<div class="t ls" style="left:1383.5px;top:368px;">None</div>
<svg class="a" style="left:400px;top:383px" width="16" height="16" viewBox="0 0 16 16" ><use href="#err"/></svg>
<div class="t ls" style="left:417.3px;top:385px;">Error</div>
<div class="t ls" style="left:654px;top:385px;">8/1/2015 9:45:16 PM</div>
<div class="t ls" style="left:958px;top:385px;;letter-spacing:-0.38px">TermDD</div>
<div class="t ls" style="left:1300px;width:72px;text-align:right;top:385px">50</div>
<div class="t ls" style="left:1383.5px;top:385px;">None</div>
<svg class="a" style="left:400px;top:400px" width="16" height="16" viewBox="0 0 16 16" ><use href="#err"/></svg>
<div class="t ls" style="left:417.3px;top:402px;">Error</div>
<div class="t ls" style="left:654px;top:402px;">8/1/2015 4:11:39 PM</div>
<div class="t ls" style="left:958px;top:402px;;letter-spacing:-0.38px">TermDD</div>
<div class="t ls" style="left:1300px;width:72px;text-align:right;top:402px">50</div>
<div class="t ls" style="left:1383.5px;top:402px;">None</div>
<svg class="a" style="left:400px;top:417px" width="16" height="16" viewBox="0 0 16 16" ><use href="#err"/></svg>
<div class="t ls" style="left:417.3px;top:419px;">Error</div>
<div class="t ls" style="left:654px;top:419px;">8/1/2015 12:22:54 PM</div>
<div class="t ls" style="left:958px;top:419px;;letter-spacing:-0.38px">TermDD</div>
<div class="t ls" style="left:1300px;width:72px;text-align:right;top:419px">50</div>
<div class="t ls" style="left:1383.5px;top:419px;">None</div>
<svg class="a" style="left:400px;top:434px" width="16" height="16" viewBox="0 0 16 16" ><use href="#err"/></svg>
<div class="t ls" style="left:417.3px;top:436px;">Error</div>
<div class="t ls" style="left:654px;top:436px;">8/1/2015 10:45:57 AM</div>
<div class="t ls" style="left:958px;top:436px;;letter-spacing:-0.38px">TermDD</div>
<div class="t ls" style="left:1300px;width:72px;text-align:right;top:436px">50</div>
<div class="t ls" style="left:1383.5px;top:436px;">None</div>
<div class="a" style="left:393px;top:611px;width:1222px;height:1px;background:#808080;"></div>
<div class="a" style="left:394px;top:612px;width:1220px;height:1px;background:#404040;"></div>
<div class="a" style="left:393px;top:611px;width:1px;height:403px;background:#808080;"></div>
<div class="a" style="left:394px;top:612px;width:1px;height:401px;background:#404040;"></div>
<div class="a" style="left:1615px;top:611px;width:1px;height:403px;background:#fff;"></div>
<div class="a" style="left:393px;top:1013px;width:1223px;height:1px;background:#fff;"></div>
<div class="t ls" style="left:401px;top:617px;font-size:11.5px">Event 50, TermDD</div>
<svg class="a" style="left:1594px;top:619px" width="9" height="9" viewBox="0 0 9 9"><path d="M1 1L8 8M8 1L1 8" stroke="#000" stroke-width="2.5"/></svg>
<div class="a" style="left:398px;top:634px;width:1213px;height:1px;background:#808080;"></div>
<div class="a" style="left:398px;top:635px;width:1213px;height:1px;background:#808080;"></div>
<div class="a" style="left:403px;top:664px;width:1203px;height:340px;border:1px solid;border-color:#fff #404040 #404040 #fff"><div class="a" style="left:0;top:0;width:1201px;height:338px;border:1px solid;border-color:#d4d0c8 #808080 #808080 #d4d0c8"></div></div>
<div class="a" style="left:403px;top:642px;width:56px;height:24px;background:#d4d0c8;border:1px solid;border-color:#fff #404040 #d4d0c8 #fff;border-bottom:none;border-radius:2px 2px 0 0"><div class="a" style="right:0;top:1px;width:1px;height:22px;background:#808080"></div><div class="a" style="left:2px;top:2px;width:51px;height:19px;border:1px dotted #000"></div></div>
<div class="t ls" style="left:411px;top:646px;font-size:11.3px">General</div>
<div class="a" style="left:459px;top:644px;width:46px;height:20px;background:#d4d0c8;border:1px solid;border-color:#fff #404040 #fff #fff;border-bottom:none;border-left:none;border-radius:0 2px 0 0"><div class="a" style="right:0;top:1px;width:1px;height:18px;background:#808080"></div></div>
<div class="t ls" style="left:463px;top:648px;font-size:11.3px">Details</div>
<div class="a sunk" style="left:418px;top:681px;width:1155px;height:137px"><div class="a" style="left:0;top:0;width:1153px;height:135px;border:1px solid;border-color:#404040 #d4d0c8 #d4d0c8 #404040"></div></div>
<div class="t dt" style="left:421px;top:685px;">The RDP protocol component X.224 detected an error in the protocol stream and has disconnected the client.</div>
<div class="t dt" style="left:416px;top:833px;">Log Name:</div>
<div class="t dt" style="left:523px;top:833px;;letter-spacing:-0.25px">System</div>
<div class="t dt" style="left:416px;top:854px;">Source:</div>
<div class="t dt" style="left:523px;top:854px;">TermDD</div>
<div class="t dt" style="left:416px;top:875px;;letter-spacing:-0.3px">Event ID:</div>
<div class="t dt" style="left:523px;top:875px;">50</div>
<div class="t dt" style="left:416px;top:896px;;letter-spacing:-0.25px">Level:</div>
<div class="t dt" style="left:523px;top:896px;">Error</div>
<div class="t dt" style="left:416px;top:917px;;letter-spacing:-0.4px">User:</div>
<div class="t dt" style="left:523px;top:917px;;letter-spacing:1.1px">N/A</div>
<div class="t dt" style="left:416px;top:938px;">OpCode:</div>
<div class="t dt" style="left:416px;top:959px;;letter-spacing:0.23px">More Information:</div>
<div class="t dt" style="left:681px;top:854px;">Logged:</div>
<div class="t dt" style="left:769px;top:854px;;letter-spacing:-0.22px">8/13/2015 3:11:39 PM</div>
<div class="t dt" style="left:681px;top:875px;">Task Category:</div>
<div class="t dt" style="left:769px;top:875px;">None</div>
<div class="t dt" style="left:681px;top:896px;">Keywords:</div>
<div class="t dt" style="left:769px;top:896px;;letter-spacing:-0.35px">Classic</div>
<div class="t dt" style="left:681px;top:917px;">Computer:</div>
<div class="t dt" style="left:769px;top:917px;;letter-spacing:-0.8px">VIB</div>
<div class="t dt" style="left:526px;top:959px;color:#0000ff;text-decoration:underline">Event Log Online Help</div>
<div class="a sunk" style="left:1621px;top:71px;width:299px;height:945px"><div class="a sunk2" style="left:0;top:0;width:297px;height:943px;background:#fff"></div></div>
<div class="a" style="left:1623px;top:73px;width:295px;height:17px;background:#d4d0c8;border:1px solid;border-color:#fff #d4d0c8 #808080 #d4d0c8"></div>
<div class="t " style="left:1628px;top:75px;font-weight:bold;font-size:11.6px">Actions</div>
<div class="a" style="left:1623px;top:91px;width:295px;height:25px;background:linear-gradient(#a6caf0 0%,#7d9fd4 30%,#3a5a9e 70%,#0a246a 100%)"></div>
<div class="t " style="left:1628px;top:97px;color:#fff;font-weight:bold;font-size:12.1px">Summary page events</div>
<svg class="a" style="left:1901px;top:101px" width="10" height="5" viewBox="0 0 10 5"><path d="M0 5L5 0L10 5z" fill="#fff"/></svg>
<svg class="a" style="left:1628px;top:121.5px" width="16" height="16" viewBox="0 0 16 16" ><use href="#openf"/></svg>
<div class="t ac" style="left:1652.5px;top:121px;">Open Saved Log...</div>
<svg class="a" style="left:1628px;top:145px" width="16" height="16" viewBox="0 0 16 16" ><use href="#funnel_o"/></svg>
<div class="t ac" style="left:1652.5px;top:145px;">Create Custom View...</div>
<div class="t ac" style="left:1652.5px;top:169px;">Import Custom View...</div>
<div class="a" style="left:1628px;top:188px;width:285px;height:1px;background:#d0ccc4;"></div>
<svg class="a" style="left:1628px;top:193px" width="16" height="16" viewBox="0 0 16 16" ><use href="#funnel"/></svg>
<div class="t ac" style="left:1652.5px;top:194px;">Filter Current Custom View...</div>
<svg class="a" style="left:1628px;top:217px" width="16" height="16" viewBox="0 0 16 16" ><use href="#props"/></svg>
<div class="t ac" style="left:1652.5px;top:218px;">Properties</div>
<svg class="a" style="left:1628px;top:241px" width="16" height="16" viewBox="0 0 16 16" ><use href="#bino"/></svg>
<div class="t ac" style="left:1652.5px;top:242px;">Find...</div>
<svg class="a" style="left:1628px;top:265px" width="16" height="16" viewBox="0 0 16 16" ><use href="#floppy"/></svg>
<div class="t ac" style="left:1652.5px;top:266px;;letter-spacing:-0.09px">Save All Events in Custom View As...</div>
<div class="t ac" style="left:1652.5px;top:290px;">Export Custom View...</div>
<div class="t ac" style="left:1652.5px;top:314px;">Copy Custom View...</div>
<div class="t ac" style="left:1652.5px;top:338px;">Attach Task To This Custom View...</div>
<div class="a" style="left:1628px;top:357px;width:285px;height:1px;background:#d0ccc4;"></div>
<div class="t ac" style="left:1652.5px;top:363px;">View</div>
<svg class="a" style="left:1905px;top:366px" width="5" height="9" viewBox="0 0 5 9"><path d="M0 0L5 4.5L0 9z" fill="#000"/></svg>
<div class="a" style="left:1628px;top:382px;width:285px;height:1px;background:#d0ccc4;"></div>
<svg class="a" style="left:1628px;top:387px" width="16" height="16" viewBox="0 0 16 16" ><use href="#delx"/></svg>
<div class="t ac" style="left:1652.5px;top:388px;">Delete</div>
<svg class="a" style="left:1628px;top:411px" width="16" height="16" viewBox="0 0 16 16" ><use href="#refresh"/></svg>
<div class="t ac" style="left:1652.5px;top:412px;">Refresh</div>
<div class="a" style="left:1628px;top:431px;width:285px;height:1px;background:#d0ccc4;"></div>
<svg class="a" style="left:1628px;top:436px" width="16" height="16" viewBox="0 0 16 16" ><use href="#help"/></svg>
<div class="t ac" style="left:1652.5px;top:437px;">Help</div>
<svg class="a" style="left:1905px;top:440px" width="5" height="9" viewBox="0 0 5 9"><path d="M0 0L5 4.5L0 9z" fill="#000"/></svg>
<div class="a" style="left:1623px;top:461px;width:295px;height:25px;background:linear-gradient(#a6caf0 0%,#7d9fd4 30%,#3a5a9e 70%,#0a246a 100%)"></div>
<div class="t " style="left:1628px;top:467px;color:#fff;font-weight:bold;font-size:12.1px">Event 50, TermDD</div>
<svg class="a" style="left:1901px;top:471px" width="10" height="5" viewBox="0 0 10 5"><path d="M0 5L5 0L10 5z" fill="#fff"/></svg>
<svg class="a" style="left:1628px;top:490px" width="16" height="16" viewBox="0 0 16 16" ><use href="#props"/></svg>
<div class="t ac" style="left:1652.5px;top:491px;">Event Properties</div>
<svg class="a" style="left:1628px;top:514px" width="16" height="16" viewBox="0 0 16 16" ><use href="#task"/></svg>
<div class="t ac" style="left:1652.5px;top:515px;;letter-spacing:0.09px">Attach Task To This Event...</div>
<svg class="a" style="left:1628px;top:538px" width="16" height="16" viewBox="0 0 16 16" ><use href="#copy"/></svg>
<div class="t ac" style="left:1652.5px;top:539px;">Copy</div>
<svg class="a" style="left:1905px;top:542px" width="5" height="9" viewBox="0 0 5 9"><path d="M0 0L5 4.5L0 9z" fill="#000"/></svg>
<svg class="a" style="left:1628px;top:562px" width="16" height="16" viewBox="0 0 16 16" ><use href="#floppy"/></svg>
<div class="t ac" style="left:1652.5px;top:563px;">Save Selected Events...</div>
<div class="a" style="left:1628px;top:582px;width:285px;height:1px;background:#d0ccc4;"></div>
<svg class="a" style="left:1628px;top:587px" width="16" height="16" viewBox="0 0 16 16" ><use href="#refresh"/></svg>
<div class="t ac" style="left:1652.5px;top:588px;">Refresh</div>
<div class="a" style="left:1628px;top:607px;width:285px;height:1px;background:#d0ccc4;"></div>
<svg class="a" style="left:1628px;top:612px" width="16" height="16" viewBox="0 0 16 16" ><use href="#help"/></svg>
<div class="t ac" style="left:1652.5px;top:613px;">Help</div>
<svg class="a" style="left:1905px;top:616px" width="5" height="9" viewBox="0 0 5 9"><path d="M0 0L5 4.5L0 9z" fill="#000"/></svg>
<div class="a" style="left:0px;top:1018px;width:1700px;height:18px;border:1px solid;border-color:#808080 #fff #fff #808080"></div>
<div class="a" style="left:1702px;top:1018px;width:130px;height:18px;border:1px solid;border-color:#808080 #fff #fff #808080"></div>
<div class="a" style="left:1834px;top:1018px;width:84px;height:18px;border:1px solid;border-color:#808080 #fff #fff #808080"></div>
<div class="a" style="left:0px;top:1037px;width:1920px;height:1px;background:#fff;"></div>
<div class="a" style="left:2px;top:1040px;width:52px;height:38px;border:1px solid;border-color:#fff #404040 #404040 #fff"><div class="a" style="left:0;top:0;width:50px;height:36px;border:1px solid;border-color:#d4d0c8 #808080 #808080 #d4d0c8"></div></div>
<svg class="a" style="left:4px;top:1050px" width="16" height="16" viewBox="0 0 16 16" ><use href="#winlogo"/></svg>
<div class="t " style="left:21px;top:1052px;font-weight:bold;font-size:12px">Start</div>
<div class="a" style="left:63px;top:1040px;width:160px;height:38px;background:#fff;border:1px solid;border-color:#404040 #fff #fff #404040"><div class="a" style="left:0;top:0;width:158px;height:36px;border:1px solid;border-color:#808080 #d4d0c8 #d4d0c8 #808080"></div></div>
<svg class="a" style="left:69px;top:1043px" width="30" height="34" viewBox="0 0 30 34"><use href="#ev_big"/></svg>
<div class="t " style="left:102px;top:1052px;font-weight:bold;font-size:11.8px">Event Viewer</div>
<div class="t " style="left:1746px;top:1050px;font-size:11.7px;letter-spacing:-0.7px">EN</div>
<div class="a" style="left:1766px;top:1046px;width:1px;height:28px;background:#808080;"></div>
<div class="a" style="left:1767px;top:1046px;width:1px;height:28px;background:#fff;"></div>
<div class="a" style="left:1770px;top:1040px;width:148px;height:38px;border:1px solid;border-color:#808080 #fff #fff #808080"></div>
<svg class="a" style="left:1775px;top:1052.5px" width="8" height="10" viewBox="0 0 8 10" ><use href="#chev"/></svg>
<svg class="a" style="left:1792px;top:1050.5px" width="18" height="18" viewBox="0 0 18 18" ><use href="#net"/></svg>
<svg class="a" style="left:1816px;top:1051px" width="18" height="16" viewBox="0 0 18 16" ><use href="#spk"/></svg>
<div class="t" style="left:1836px;width:66px;text-align:center;top:1044px;font-size:11.3px">6:39 AM</div>
<div class="t" style="left:1836px;width:66px;text-align:center;top:1060px;font-size:11.3px">8/17/2015</div>
<svg class="a" style="left:1900px;top:1053.3px" width="16" height="12" viewBox="0 0 16 12" ><use href="#desk"/></svg>
<div class="a" style="left:396px;top:145px;width:1217px;height:461px;overflow:hidden;pointer-events:none"><svg class="a" style="left:274.20000000000005px;top:33.099999999999994px;opacity:0.6" width="1" height="1"><g transform="rotate(45) scale(0.973)"><use href="#wm"/></g></svg></div>
<div class="a" style="left:396px;top:145px;width:1217px;height:461px;overflow:hidden;pointer-events:none"><svg class="a" style="left:691.2px;top:28.099999999999994px;opacity:0.6" width="1" height="1"><g transform="rotate(45) scale(1.0)"><use href="#wm"/></g></svg></div>
<div class="a" style="left:394px;top:613px;width:1221px;height:400px;overflow:hidden;pointer-events:none"><svg class="a" style="left:299.79999999999995px;top:76.39999999999998px;opacity:0.6" width="1" height="1"><g transform="rotate(45) scale(1.04)"><use href="#wm"/></g></svg></div>
<div class="a" style="left:394px;top:613px;width:1221px;height:400px;overflow:hidden;pointer-events:none"><svg class="a" style="left:689.5px;top:169.79999999999995px;opacity:0.6" width="1" height="1"><g transform="rotate(45) scale(1.022)"><use href="#wm"/></g></svg></div>
</div></body></html>
